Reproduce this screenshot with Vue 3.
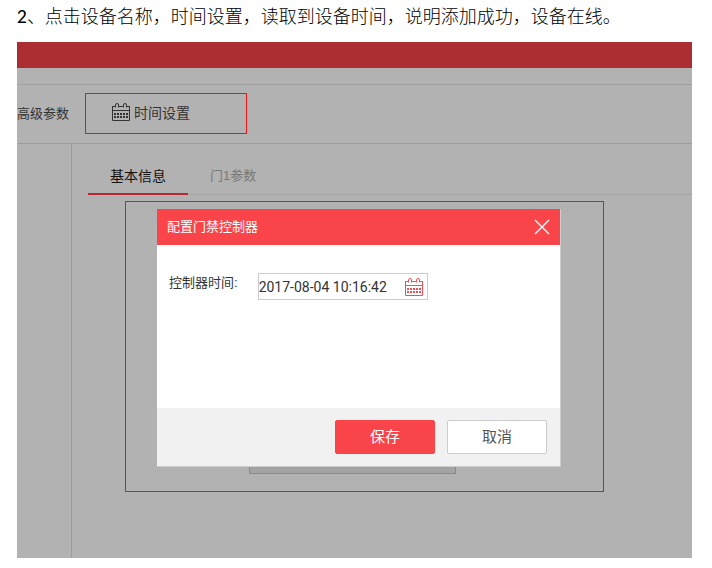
<template>
  <article class="guide">
    <h1 class="step"><b>2</b>、点击设备名称，时间设置，读取到设备时间，说明添加成功，设备在线。</h1>

    <div class="screen">
      <div class="top-bar"></div>
      <div class="sub-bar"></div>
      <nav class="toolbar">
        <button type="button" class="tool advanced">高级参数</button>
        <button type="button" class="tool marked" @click="open = true">
          <svg class="icon" viewBox="0 0 18 18" aria-hidden="true">
            <path d="M.5 3.500h3M6.500 3.500h5M14.500 3.500h3M.5 3v14.500h17V3M.5 7.500h17" />
            <path d="M3.500 4.500V2a1.500 1.500 0 0 1 3 0v2.500M11.500 4.500V2a1.500 1.500 0 0 1 3 0v2.500" />
            <path class="dots" d="M2 11h14M2 14h14" />
          </svg>
          <span>时间设置</span>
        </button>
      </nav>

      <div class="main">
        <aside class="sidebar"></aside>
        <section class="content">
          <div class="tabs" role="tablist">
            <button
              v-for="tab in tabs"
              :key="tab"
              type="button"
              role="tab"
              class="tab"
              :class="{ active: tab === activeTab }"
              :aria-selected="tab === activeTab"
              @click="activeTab = tab"
            >
              {{ tab }}
            </button>
          </div>
          <div class="panel">
            <div class="panel-action"></div>
          </div>
        </section>
      </div>

      <div v-if="open" class="overlay">
        <div class="highlight">
          <form class="dialog" role="dialog" aria-labelledby="dialog-title" @submit.prevent="open = false">
            <header class="dialog-header">
              <h2 id="dialog-title">配置门禁控制器</h2>
              <button type="button" class="close" aria-label="关闭" @click="open = false">
                <svg viewBox="0 0 16 16" aria-hidden="true"><path d="M1 1l14 14M15 1L1 15" /></svg>
              </button>
            </header>
            <div class="dialog-body">
              <label for="controller-time">控制器时间:</label>
              <div class="date-field">
                <input id="controller-time" v-model="time" type="text" />
                <button type="button" class="pick" aria-label="选择时间">
                  <svg class="icon" viewBox="0 0 18 18" aria-hidden="true">
                    <path d="M.5 3.500h3M6.500 3.500h5M14.500 3.500h3M.5 3v14.500h17V3M.5 7.500h17" />
                    <path d="M3.500 4.500V2a1.500 1.500 0 0 1 3 0v2.500M11.500 4.500V2a1.500 1.500 0 0 1 3 0v2.500" />
                    <path class="dots" d="M2 11h14M2 14h14" />
                  </svg>
                </button>
              </div>
            </div>
            <footer class="dialog-footer">
              <button type="submit" class="btn primary">保存</button>
              <button type="button" class="btn" @click="open = false">取消</button>
            </footer>
          </form>
        </div>
      </div>
    </div>
  </article>
</template>

<script setup>
  import { ref } from 'vue'

  const tabs = ['基本信息', '门1参数']
  const activeTab = ref('基本信息')
  const open = ref(true)
  const time = ref('2017-08-04 10:16:42')
</script>

<style>
  body {
    margin: 0;
    background: #fff;
  }
</style>

<style scoped>
  .guide {
    padding: 3px 20px 11px 17px;
    font-family: 'Liberation Sans', 'Noto Sans CJK SC', sans-serif;
    font-size: 13px;
    color: #333;
  }

  .guide * {
    box-sizing: border-box;
  }

  button,
  input {
    margin: 0;
    padding: 0;
    border: none;
    background: transparent;
    font: inherit;
    color: inherit;
  }

  button {
    cursor: pointer;
  }

  .step {
    margin: 0 0 12px;
    font-family: Lato, 'Noto Sans CJK SC', sans-serif;
    font-size: 18px;
    font-weight: 300;
    line-height: 26px;
    white-space: nowrap;
    color: #000;
  }

  .step b {
    font-size: 17px;
    font-weight: 500;
  }

  .screen {
    position: relative;
    overflow: hidden;
    background: #b2b2b2;
  }

  .top-bar {
    height: 26px;
    background: #ac2d32;
  }

  .sub-bar {
    height: 17px;
    border-bottom: 1px solid #a0a0a0;
  }

  .toolbar {
    display: flex;
    align-items: center;
    gap: 16px;
    padding: 8px 0 9px;
    border-bottom: 1px solid #9c9c9c;
  }

  .tool {
    display: flex;
    align-items: center;
    height: 41px;
    padding-bottom: 3px;
    white-space: nowrap;
  }

  .marked {
    width: 162px;
    gap: 4px;
    padding-left: 26px;
    border: 1px solid #f01414;
    font-size: 14px;
  }

  .icon {
    display: block;
    width: 18px;
    height: 18px;
    fill: none;
    stroke: currentColor;
    stroke-width: 1;
  }

  .icon .dots {
    stroke-width: 2;
    stroke-dasharray: 2 1;
  }

  .main {
    display: flex;
  }

  .sidebar {
    width: 55px;
    border-right: 1px solid #9c9c9c;
  }

  .content {
    flex: 1;
    padding-left: 16px;
  }

  .tabs {
    display: flex;
    height: 51px;
    border-bottom: 1px solid #a4a4a4;
  }

  .tab {
    height: 51px;
    padding: 12px 22px 0;
    border-bottom: 2px solid transparent;
    color: #777;
  }

  .tab.active {
    border-bottom-color: #b92832;
    font-size: 14px;
    color: #111;
  }

  .panel {
    padding: 245px 236px 84px 161px;
  }

  .panel-action {
    height: 34px;
    border: 1px solid #8a8a8a;
    background: #a3a3a3;
  }

  .overlay {
    position: absolute;
    inset: 0;
    padding: 159px 88px 66px 108px;
  }

  .highlight {
    padding: 7px 42px 24px 31px;
    border: 1px solid #f01414;
  }

  .dialog {
    border-right: 1px solid #ccc;
    border-bottom: 1px solid #ccc;
    background: #fff;
  }

  .dialog-header {
    display: flex;
    align-items: center;
    justify-content: space-between;
    height: 36px;
    padding: 0 10px;
    background: #f94449;
    color: #fff;
  }

  .dialog-header h2 {
    margin: 0;
    padding-bottom: 3px;
    font-size: 13px;
    font-weight: 400;
  }

  .close svg {
    display: block;
    width: 16px;
    height: 16px;
    fill: none;
    stroke: #fff;
    stroke-width: 1.4;
  }

  .dialog-body {
    display: flex;
    align-items: flex-start;
    gap: 20px;
    height: 163px;
    padding: 28px 12px 0;
  }

  .dialog-body label {
    line-height: 20px;
  }

  .date-field {
    display: flex;
    align-items: center;
    width: 170px;
    height: 27px;
    padding-right: 4px;
    border: 1px solid #ccc;
  }

  .date-field input {
    flex: 1;
    min-width: 0;
    font-family: Roboto, sans-serif;
    font-size: 14px;
    outline: none;
  }

  .pick {
    color: #f25055;
  }

  .dialog-footer {
    display: flex;
    justify-content: flex-end;
    gap: 12px;
    padding: 12px 13px 12px 12px;
    background: #f1f1f1;
  }

  .btn {
    width: 100px;
    height: 34px;
    padding-bottom: 3px;
    border: 1px solid #ccc;
    border-radius: 2px;
    background: #fff;
    font-size: 15px;
    color: #555;
  }

  .btn.primary {
    border-color: #f94449;
    background: #f94449;
    color: #fff;
  }
</style>
